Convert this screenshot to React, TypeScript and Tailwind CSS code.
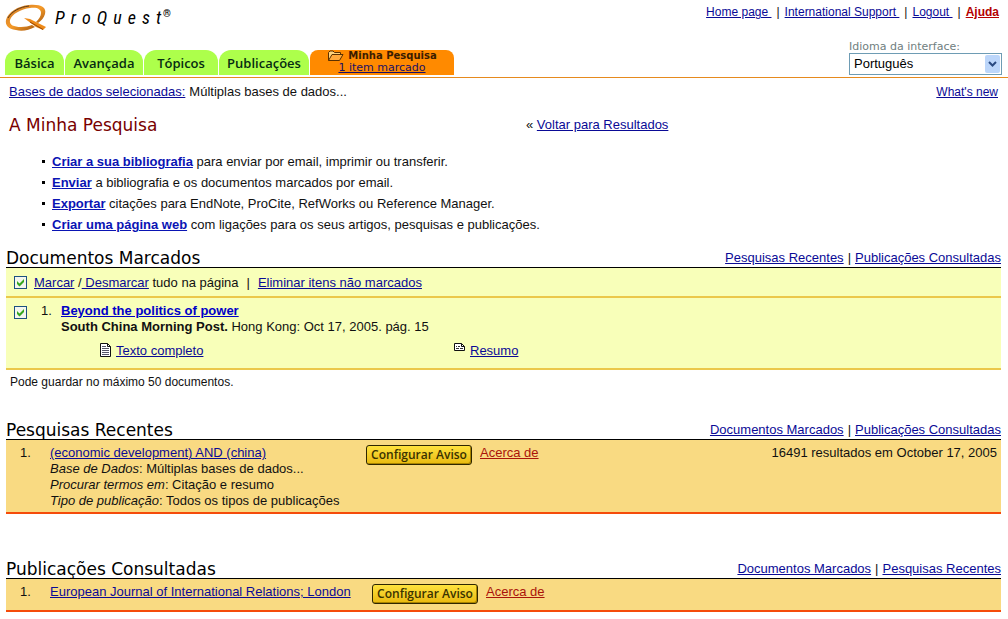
import { type ReactNode } from 'react'

const tabs = [
  { label: 'Básica', width: 'w-[59px]' },
  { label: 'Avançada', width: 'w-[78px]' },
  { label: 'Tópicos', width: 'w-[74px]' },
  { label: 'Publicações', width: 'w-[90px]' }
]

const actions = [
  { link: 'Criar a sua bibliografia', text: 'para enviar por email, imprimir ou transferir.' },
  { link: 'Enviar', text: 'a bibliografia e os documentos marcados por email.' },
  { link: 'Exportar', text: 'citações para EndNote, ProCite, RefWorks ou Reference Manager.' },
  { link: 'Criar uma página web', text: 'com ligações para os seus artigos, pesquisas e publicações.' }
]

const searchDetails = [
  { name: 'Base de Dados', value: 'Múltiplas bases de dados...' },
  { name: 'Procurar termos em', value: 'Citação e resumo' },
  { name: 'Tipo de publicação', value: 'Todos os tipos de publicações' }
]

function Link({ children, className = 'text-[#0a0a96]' }: { children: ReactNode; className?: string }) {
  return (
    <a href="#" className={`underline underline-offset-1 ${className}`}>
      {children}
    </a>
  )
}

function Logo() {
  return (
    <div className="flex items-center gap-2">
      <svg width="42" height="28" viewBox="0 0 42 28" aria-hidden="true">
        <defs>
          <linearGradient id="ring" x1="0" y1="0" x2="1" y2="1">
            <stop offset="0" stopColor="#c8762a" />
            <stop offset="0.5" stopColor="#f59a28" />
            <stop offset="1" stopColor="#8a4208" />
          </linearGradient>
        </defs>
        <path
          fillRule="evenodd"
          fill="url(#ring)"
          d="M24 1C35 0 42 3 40 10C39 14 36 17 33 19L31 18C34 15 36 12 36 9C36 5 32 3 25 4C16 5 7 10 5 16C4 21 9 23 16 23C20 23 24 22 27 21L30 23C24 26 17 28 11 26C3 25 0 21 1 16C3 8 13 2 24 1Z"
        />
        <path d="M3 14C7 7 15 3 24 2" fill="none" stroke="#5c3a18" strokeWidth="1" />
        <path d="M19 14L25 15L41 23L38 26L31 23Z" fill="#ee8a18" />
        <path d="M25 18L38 25.500" stroke="#9a4a08" strokeWidth="1" />
      </svg>
      <span className="flex gap-1.5 font-['Liberation_Sans_Narrow','Roboto_Condensed',Roboto,sans-serif] text-lg leading-7 text-black italic">
        {'ProQuest'.split('').map((letter, i) => (
          <span key={i}>{letter}</span>
        ))}
        <span className="-ml-1 text-[10px] leading-5 font-bold not-italic">®</span>
      </span>
    </div>
  )
}

function FolderIcon() {
  return (
    <svg width="17" height="12" viewBox="0 0 17 12" aria-hidden="true">
      <path d="M1.5 10.5V2.5L3 1H6L7.5 2.5H13.5V4.5" fill="#ffd27a" stroke="#5a3000" />
      <path d="M1.5 10.5L5 4.5H16L12.5 10.5Z" fill="#ffa93c" stroke="#5a3000" />
    </svg>
  )
}

function PageIcon() {
  return (
    <svg width="11" height="14" viewBox="0 0 11 14" aria-hidden="true">
      <path d="M0.5 0.5H7.5L10.5 3.5V13.5H0.5Z" fill="#fff" stroke="#111" />
      <path d="M7.5 0.5V3.5H10.5" fill="none" stroke="#111" />
      <path d="M2 3.5H6M2 5.5H9M2 7.5H9M2 9.5H9M2 11.5H9" stroke="#556" />
    </svg>
  )
}

function AbstractIcon() {
  return (
    <svg width="11" height="8" viewBox="0 0 11 8" aria-hidden="true">
      <path d="M0.5 0.5H7.5L10.5 3.5V7.5H0.5Z" fill="#fff" stroke="#111" />
      <path d="M7.5 0.5V3.5H10.5" fill="none" stroke="#111" />
      <path d="M2 3.5H3M4 3.5H6M2 5.5H5M6 5.5H9" stroke="#333" />
    </svg>
  )
}

function Checkbox({ label }: { label: string }) {
  return (
    <span className="relative flex h-[13px] w-[13px]">
      <input
        type="checkbox"
        defaultChecked
        aria-label={label}
        className="peer h-[13px] w-[13px] appearance-none border border-[#1c5180] bg-[#f4f6ee]"
      />
      <svg
        width="13"
        height="13"
        viewBox="0 0 13 13"
        className="pointer-events-none absolute inset-0 hidden peer-checked:block"
        aria-hidden="true"
      >
        <path d="M3 5V8L5.5 10.5L10 6V3L5.5 7.5Z" fill="#35a81e" />
      </svg>
    </span>
  )
}

function AlertButton() {
  return (
    <button
      type="button"
      className="h-5 w-[106px] rounded-[3px] border border-[#2e2600] bg-linear-to-b from-[#ffe23c] to-[#e9b90a] text-center font-['Open_Sans',sans-serif] text-xs leading-4 font-semibold whitespace-nowrap text-[#3a3200] shadow-[inset_-1px_-1px_0_#a88400]"
    >
      Configurar Aviso
    </button>
  )
}

function SectionHeader({ title, links }: { title: string; links: [string, string] }) {
  return (
    <div className="flex h-5 items-end justify-between border-b border-black">
      <h2 className="font-['DejaVu_Sans',sans-serif] text-[17px] leading-[18px] text-black">{title}</h2>
      <div className="flex gap-1 leading-[18px]">
        <Link>{links[0]}</Link>
        <span>|</span>
        <Link>{links[1]}</Link>
      </div>
    </div>
  )
}

export default function App() {
  return (
    <div className="min-h-screen bg-white font-['Liberation_Sans',Arial,sans-serif] text-[13px] leading-4 text-[#111]">
      <header className="flex h-[78px] items-stretch justify-between border-b border-b-[#e68a1e] pr-1.5 pl-[5px]">
        <div className="flex flex-col justify-between pt-1 pb-0.5">
          <Logo />
          <nav className="flex gap-px font-['Open_Sans',sans-serif] text-[13px]">
            {tabs.map(tab => (
              <a
                key={tab.label}
                href="#"
                className={`flex h-[25px] items-center justify-center rounded-t-xl bg-[#adff4b] font-semibold text-[#062c12] ${tab.width}`}
              >
                {tab.label}
              </a>
            ))}
            <a
              href="#"
              className="flex h-[25px] w-36 flex-col items-center rounded-t-lg bg-[#ff8a00] font-['DejaVu_Sans',sans-serif] text-[10px] leading-3"
            >
              <span className="flex items-center gap-1 font-bold text-[#3a1c00]">
                <FolderIcon />
                Minha Pesquisa
              </span>
              <span className="text-[11px] text-[#1a1066] underline">1 item marcado</span>
            </a>
          </nav>
        </div>
        <div className="flex flex-col items-end justify-between pt-1 pb-0.5">
          <div className="flex gap-[5px] pr-[3px] text-xs leading-4">
            <Link>Home page&nbsp;</Link>
            <span>|</span>
            <Link>International Support&nbsp;</Link>
            <span>|</span>
            <Link>Logout&nbsp;</Link>
            <span>|</span>
            <Link className="font-bold text-[#b40000]">Ajuda</Link>
          </div>
          <div className="w-[153px]">
            <label
              htmlFor="language"
              className="block font-['DejaVu_Sans',sans-serif] text-[11px] leading-3 text-[#708080]"
            >
              Idioma da interface:
            </label>
            <div className="relative">
              <select
                id="language"
                className="block h-[22px] w-full appearance-none border border-[#6e9cb4] bg-white pl-1 text-[13px] text-black"
              >
                <option>Português</option>
              </select>
              <span className="pointer-events-none absolute top-0.5 right-0.5 flex h-[18px] w-[15px] items-center justify-center rounded-xs bg-[#bcd6fa]">
                <svg width="9" height="6" viewBox="0 0 9 6" aria-hidden="true">
                  <path d="M1 1L4.5 4.5L8 1" fill="none" stroke="#2a4a80" strokeWidth="2" />
                </svg>
              </span>
            </div>
          </div>
        </div>
      </header>

      <main className="pr-[7px] pl-1.5">
        <div className="flex justify-between pt-1.5 pr-[3px] pl-[3px]">
          <p className="flex gap-1">
            <Link>Bases de dados selecionadas:</Link>
            <span>Múltiplas bases de dados...</span>
          </p>
          <span className="text-xs leading-4">
            <Link>What's new</Link>
          </span>
        </div>

        <div className="flex items-center pt-[15px] pl-[3px] leading-5">
          <h1 className="w-[517px] font-['DejaVu_Sans',sans-serif] text-[17px] leading-5 text-[#780000]">
            A Minha Pesquisa
          </h1>
          <p>
            « <Link>Voltar para Resultados</Link>
          </p>
        </div>

        <ul className="pt-4 pl-9 leading-[21px]">
          {actions.map(action => (
            <li key={action.link} className="flex items-center">
              <span className="mr-[7px] h-[3px] w-[3px] bg-black" />
              <span>
                <Link className="font-bold text-[#0a14b4]">{action.link}</Link> {action.text}
              </span>
            </li>
          ))}
        </ul>

        <section className="pt-[13px]">
          <SectionHeader title="Documentos Marcados" links={['Pesquisas Recentes', 'Publicações Consultadas']} />
          <div className="flex h-[30px] items-center border-b-2 border-[#ebc84b] bg-[#f8ffb9] pt-px pl-2">
            <Checkbox label="Marcar tudo na página" />
            <span className="ml-[7px]">
              <Link>Marcar</Link> /<Link>&nbsp;Desmarcar</Link> tudo na página
            </span>
            <span className="mx-2">|</span>
            <Link>Eliminar itens não marcados</Link>
          </div>
          <div className="flex items-start border-b-2 border-[#ebc84b] bg-[#f8ffb9] pt-[5px] pb-[9px] pl-2">
            <span className="pt-[3px]">
              <Checkbox label="Beyond the politics of power" />
            </span>
            <span className="w-[34px] pl-3.5">1.</span>
            <div className="grow">
              <Link className="font-bold text-[#0000c8]">Beyond the politics of power</Link>
              <p>
                <b>South China Morning Post.</b> Hong Kong: Oct 17, 2005. pág. 15
              </p>
              <div className="flex pt-2 pl-[39px]">
                <span className="flex w-[354px] gap-[5px]">
                  <PageIcon />
                  <Link>Texto completo</Link>
                </span>
                <span className="flex gap-[5px]">
                  <AbstractIcon />
                  <Link>Resumo</Link>
                </span>
              </div>
            </div>
          </div>
          <p className="pt-1 pl-1 text-xs leading-4">Pode guardar no máximo 50 documentos.</p>
        </section>

        <section className="pt-[30px]">
          <SectionHeader title="Pesquisas Recentes" links={['Documentos Marcados', 'Publicações Consultadas']} />
          <div className="flex items-start border-b-2 border-[#f54b0a] bg-[#f9da82] pt-[5px] pr-1 pb-[3px]">
            <span className="w-11 pl-3.5">1.</span>
            <div className="w-[316px]">
              <Link>(economic development) AND (china)</Link>
              {searchDetails.map(detail => (
                <p key={detail.name}>
                  <i>{detail.name}</i>: {detail.value}
                </p>
              ))}
            </div>
            <AlertButton />
            <span className="pl-2">
              <Link className="text-[#aa140a]">Acerca de</Link>
            </span>
            <span className="ml-auto">16491 resultados em October 17, 2005</span>
          </div>
        </section>

        <section className="pt-[45px]">
          <SectionHeader title="Publicações Consultadas" links={['Documentos Marcados', 'Pesquisas Recentes']} />
          <div className="flex items-start border-b-2 border-[#f54b0a] bg-[#f9da82] pt-[5px] pr-1 pb-1.5">
            <span className="w-11 pl-3.5">1.</span>
            <div className="w-[322px]">
              <Link>European Journal of International Relations; London</Link>
            </div>
            <AlertButton />
            <span className="pl-2">
              <Link className="text-[#aa140a]">Acerca de</Link>
            </span>
          </div>
        </section>
      </main>
    </div>
  )
}
